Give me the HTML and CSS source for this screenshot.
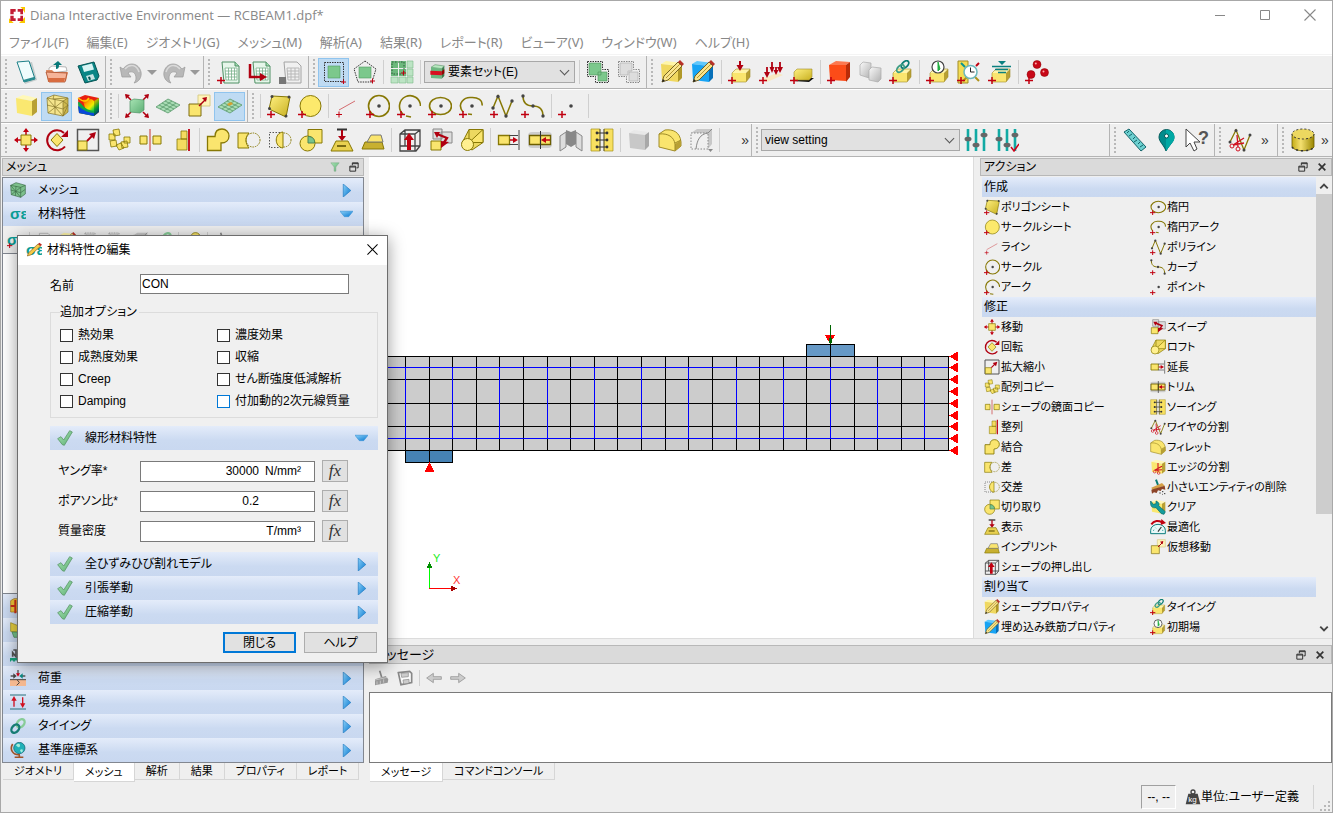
FILE: index.html
```html
<!DOCTYPE html>
<html lang="ja">
<head>
    <meta charset="UTF-8">
    <meta name="viewport" content="width=device-width, initial-scale=1.0">
    <title>Diana Interactive Environment — RCBEAM1.dpf*</title>
    <link rel="stylesheet" href="styles.css">
</head>
<body>
    <!-- icon sprite -->
    <svg class="sprite" aria-hidden="true">
        <defs>
            <linearGradient id="gy" x1="0" y1="0" x2="1" y2="1"><stop offset="0" stop-color="#fff080"/><stop offset="1" stop-color="#c8b020"/></linearGradient>
            <linearGradient id="gg" x1="0" y1="0" x2="1" y2="1"><stop offset="0" stop-color="#a8e4b4"/><stop offset="1" stop-color="#5cae74"/></linearGradient>
            <linearGradient id="gr" x1="0" y1="0" x2="1" y2="1"><stop offset="0" stop-color="#fafafa"/><stop offset="1" stop-color="#b0b0b0"/></linearGradient>
            <linearGradient id="gb" x1="0" y1="0" x2="1" y2="1"><stop offset="0" stop-color="#8ad0f8"/><stop offset="1" stop-color="#0878d0"/></linearGradient>
            <linearGradient id="rainbow" x1="0" y1="0" x2="1" y2="1"><stop offset="0" stop-color="#e00"/><stop offset=".3" stop-color="#fa0"/><stop offset=".5" stop-color="#ee0"/><stop offset=".7" stop-color="#0c4"/><stop offset="1" stop-color="#00c"/></linearGradient>
            <linearGradient id="cyl" x1="0" y1="0" x2="1" y2="0"><stop offset="0" stop-color="#c4ac18"/><stop offset=".4" stop-color="#f4e070"/><stop offset="1" stop-color="#9a8600"/></linearGradient>
            <path id="plus" d="M0 20.500h8M4 17v7" stroke="#c00010" stroke-width="1.500" fill="none"/>
            <g id="pencil"><path d="M2 22l2-6L18 2l4 4L8 20z" fill="#f8e48c" stroke="#66541a" stroke-width=".9"/><path d="M6 18L20 4" stroke="#b89830"/><path d="M2 22l1-3 2 2z" fill="#222"/><path d="M18 2l2-2 4 4-2 2z" fill="#b83028"/></g>
            <g id="block"><path d="M4 13l4-4h14l-4 4z" fill="#fff4a8"/><path d="M4 13h14v9H4z" fill="#fae56e"/><path d="M18 13l4-4v8l-4 5z" fill="#b8a032"/><path d="M4 13l4-4h14v8l-4 5H4z" fill="none" stroke="#a08c28" stroke-width=".6"/></g>
            <g id="sheet"><path d="M5 2h13l4 4v17H7z" fill="#e6f6ea" stroke="#4e9064"/><path d="M18 2v4h4" fill="#a4dcb2" stroke="#4e9064"/><path d="M8 8h12v12H9zM8 11h12M8.500 14H20M8.500 17H20M11.500 8v12M14.500 8v12M17.500 8v12" fill="#fff" stroke="#78b08a" stroke-width=".8"/></g>
        </defs>
        <symbol id="logo" viewBox="0 0 24 24"><path d="M17 0h7v7zM0 24v-7l7 7zM15 24l9-9v9zM18 0l6 0v9z" fill="#fbc800"/><path d="M2 3h8v4H7v4H2zM13 3h8v8h-4V7h-4zM2 13h5v4h3v4H2zM21 13v8h-8v-4h4v-4z" fill="#c41c34"/></symbol>
        <symbol id="new" viewBox="0 0 24 24"><path d="M5 3l13-1 5 18-12 4z" fill="#98a8a8" opacity=".5"/><path d="M3 2l12-1 6 18-11 3z" fill="#eefcfc" stroke="#1c8088"/><path d="M10 22l-1-2 11-3 1 2z" fill="#2a8c90"/></symbol>
        <symbol id="open" viewBox="0 0 24 24"><path d="M4 8l3-2 14 1 1 4-18 2z" fill="#fff" stroke="#999" stroke-width=".7"/><path d="M1 10h6l2 2h14l-2 9-18 1z" fill="#e08a60"/><path d="M1 12l21 1-2 9H4z" fill="#f6b498" stroke="#a84c2a" stroke-width=".8"/><path d="M3 18h17l-1 4H4z" fill="#d86c40"/><path d="M11 9V5h-3l5-4 4 4h-3c0 3-1 4-3 4z" fill="#087878"/></symbol>
        <symbol id="save" viewBox="0 0 24 24"><path d="M2 6l16-4 5 14-2 4-12 3z" fill="#0a8686" stroke="#045454"/><path d="M6 6l10-2.500 2 6-10 2.500z" fill="#d8f4f4"/><path d="M10 16l7-2 2 5-7 2z" fill="#c8e4e4"/><path d="M12 17l2-.5 1 3-2 .5z" fill="#045454"/></symbol>
        <symbol id="undo" viewBox="0 0 24 24"><path d="M1 7l2 10h9l-3-4c4-3 8 0 8 5 0 2-1 4-2 5 5-1 8-6 7-11C20 3 10 1 4 9z" fill="#b8b8b8" stroke="#9a9a9a" stroke-width=".7"/><path d="M6 9c5-6 12-4 14 3" stroke="#dadada" stroke-width="1.500" fill="none"/></symbol>
        <symbol id="redo" viewBox="0 0 24 24"><path d="M23 7l-2 10h-9l3-4c-4-3-8 0-8 5 0 2 1 4 2 5-5-1-8-6-7-11C4 3 14 1 20 9z" fill="#b8b8b8" stroke="#9a9a9a" stroke-width=".7"/><path d="M18 9C13 3 6 5 4 12" stroke="#dadada" stroke-width="1.500" fill="none"/></symbol>
        <symbol id="sheet-add" viewBox="0 0 24 24"><use href="#sheet"/><use href="#plus"/></symbol>
        <symbol id="sheet-go" viewBox="0 0 24 24"><use href="#sheet"/><path d="M2 4v13h13" fill="none" stroke="#b00010" stroke-width="2.500"/><path d="M12 13l7 4-7 4z" fill="#b00010"/></symbol>
        <symbol id="sheet-off" viewBox="0 0 24 24"><path d="M5 2h13l4 4v17H7z" fill="#f0f0f0" stroke="#a4a4a4"/><path d="M8 8h12v12H9zM8 11h12M8 14h12M8 17h12M12 8v12M16 8v12" fill="none" stroke="#b8b8b8"/><path d="M0 17h7v7H0z" fill="#777"/></symbol>
        <symbol id="sel-box" viewBox="0 0 24 24"><path d="M2.500 2.500h19v19h-19z" fill="none" stroke="#333" stroke-dasharray="1.500 1"/><path d="M6 6h12v12H6z" fill="#7cc88c" stroke="#4f9c60" stroke-width=".6"/><path d="M19 22h5M21.500 19.500v5" stroke="#c00010"/></symbol>
        <symbol id="sel-poly" viewBox="0 0 24 24"><path d="M12 1l11 8-4 13H5L1 9z" fill="none" stroke="#333" stroke-dasharray="1.500 1"/><path d="M6 7h12v11H6z" fill="#7cc88c" stroke="#4f9c60" stroke-width=".6"/><path d="M17 21h5M19.500 18.500v5" stroke="#c00010"/></symbol>
        <symbol id="grid" viewBox="0 0 24 24"><path d="M1 1h7v7H1zM9 1h7v7H9zM1 9h7v7H1zM9 9h7v7H9z" fill="#6cb87c"/><path d="M17 1h6v7h-6zM17 9h6v7h-6zM1 17h7v6H1zM9 17h7v6H9zM17 17h6v6h-6z" fill="#bce4c4" stroke="#78b888" stroke-width=".6"/><path d="M2 2h12v12H2z" fill="none" stroke="#2c5c38" stroke-dasharray="1.500 1.500"/><path d="M11 13h5M13.500 10.500v5" stroke="#c00010"/></symbol>
        <symbol id="set" viewBox="0 0 24 24"><path d="M3 5l6-4 14 2-4 4z" fill="#b8e8c0" stroke="#387848" stroke-width=".7"/><path d="M3 5l16 2v15L3 21z" fill="#6cb880"/><path d="M19 7l4-4v15l-4 4z" fill="#3c7c4c"/><path d="M2 10l17 1v6L2 16z" fill="#d81020"/><path d="M19 11l4-3v6l-4 3z" fill="#900"/></symbol>
        <symbol id="union-on" viewBox="0 0 24 24"><path d="M1.500 1.500h15v8h6v13h-13v-6h-8z" fill="none" stroke="#333" stroke-dasharray="1.500 1"/><path d="M3 3h12v12H3zM12 12h9v9h-9z" fill="#7cc88c" stroke="#4a9058" stroke-width=".6"/></symbol>
        <symbol id="union-off" viewBox="0 0 24 24"><path d="M1.500 1.500h15v8h6v13h-13v-6h-8z" fill="none" stroke="#888" stroke-dasharray="1.500 1"/><path d="M3 3h12v8h-4v4H3zM12 12h9v9h-9z" fill="#ddd" stroke="#aaa" stroke-width=".6"/></symbol>
        <symbol id="prop" viewBox="0 0 24 24"><path d="M1 4l5-3 16 2-4 3z" fill="#fff6a8"/><path d="M1 4l17 2v16L2 20z" fill="#f0d860"/><path d="M18 6l4-3v15l-4 4z" fill="#b09828"/><use href="#pencil"/></symbol>
        <symbol id="rebar" viewBox="0 0 24 24"><path d="M1 4l5-3 16 2-4 3z" fill="#60c8fc"/><path d="M1 4l17 2v16L2 20z" fill="#18a4f4"/><path d="M18 6l4-3v15l-4 4z" fill="#0870b8"/><use href="#pencil"/></symbol>
        <symbol id="load" viewBox="0 0 24 24"><use href="#block"/><path d="M12 1v6" stroke="#b00010" stroke-width="2"/><path d="M8.500 5h7L12 11z" fill="#b00010"/><use href="#plus"/></symbol>
        <symbol id="loads" viewBox="0 0 24 24"><path d="M2 19l16-6 6 2-16 7z" fill="#f8e8c0"/><path d="M8 7v8M13 2v8M17 7v6M21 2v8" stroke="#b00010" stroke-width="1.800"/><path d="M5 12h6l-3 6zM10.500 7h5L13 13zM18 7h6l-3 6zM14.500 10h5L17 15z" fill="#b00010"/><use href="#plus"/></symbol>
        <symbol id="support" viewBox="0 0 24 24"><path d="M3 21l6-3h15l-5 4z" fill="#111"/><path d="M4 12l3-3h15v8l-3 3H4z" fill="url(#gy)" stroke="#a08c28" stroke-width=".6"/><use href="#plus"/></symbol>
        <symbol id="red-cube" viewBox="0 0 24 24"><path d="M2 5l17-1v17L3 20z" fill="#fc4c18"/><path d="M2 5l7-4 14 1-4 3z" fill="#fc7850"/><path d="M19 5l4-3v15l-4 5z" fill="#b82c08"/><use href="#plus"/></symbol>
        <symbol id="cubes-off" viewBox="0 0 24 24"><path d="M2 5l3-3 8 1v13l-2 2-9-3z" fill="url(#gr)" stroke="#aaa" stroke-width=".7"/><path d="M11 10l3-3 9 1v11l-3 3-9-2z" fill="url(#gr)" stroke="#aaa" stroke-width=".7"/></symbol>
        <symbol id="tying" viewBox="0 0 24 24"><use href="#block"/><ellipse cx="16" cy="4.500" rx="4.500" ry="2.800" transform="rotate(-45 16 4.500)" fill="none" stroke="#0a7c74" stroke-width="1.800"/><ellipse cx="11.500" cy="8.500" rx="4.500" ry="2.800" transform="rotate(-45 11.500 8.500)" fill="none" stroke="#3c9c84" stroke-width="1.800"/><use href="#plus"/></symbol>
        <symbol id="initial" viewBox="0 0 24 24"><use href="#block"/><circle cx="12" cy="7" r="6" fill="#fff" stroke="#444" stroke-width="1.200"/><path d="M12 2v9l2-2z" fill="#20b040" stroke="#20b040"/><use href="#plus"/></symbol>
        <symbol id="time" viewBox="0 0 24 24"><path d="M1 1h10v22H1z" fill="#f4dc54" stroke="#a08c28"/><path d="M4 3l4 4" stroke="#0a9490" stroke-width="2"/><path d="M22 3l-3 3" stroke="#c00010" stroke-width="2"/><path d="M22 21l-4-4M6 21l4-4" stroke="#b0941c" stroke-width="2"/><circle cx="13.500" cy="12" r="6.500" fill="#fff" stroke="#6cb8bc" stroke-width="1.500"/><path d="M13.500 7.500V12h4" fill="none" stroke="#222"/><use href="#plus"/></symbol>
        <symbol id="water" viewBox="0 0 24 24"><use href="#block"/><path d="M10 1h8l-4 4z" fill="#0a8080"/><path d="M4 6.500h19M7 9.500h13M10 12.500h8" stroke="#0a8080" stroke-width="1.300"/><use href="#plus"/></symbol>
        <symbol id="nodes" viewBox="0 0 24 24"><g fill="#c80818" stroke="#800" stroke-width=".5"><circle cx="12" cy="4.500" r="4"/><circle cx="6" cy="14.500" r="4"/><circle cx="19.500" cy="12.500" r="4"/></g><circle cx="10.800" cy="3.500" r="1" fill="#faa"/><circle cx="18.500" cy="11.500" r="1" fill="#faa"/><use href="#plus"/></symbol>

        <symbol id="cube" viewBox="0 0 24 24"><path d="M2 4l7-3 14 3-3 3z" fill="#fff8b8"/><path d="M2 4l16 3v15L3 19z" fill="#fae870"/><path d="M18 7l5-3v14l-5 4z" fill="#b8a034"/></symbol>
        <symbol id="cube-mesh" viewBox="0 0 24 24"><path d="M2 4l7-3 14 3v14l-5 4L3 19z" fill="#f4e48c"/><path d="M18 7l5-3v14l-5 4z" fill="#cdb850"/><path d="M2 4l7-3 14 3v14l-5 4L3 19zM2 4l16 3v15M18 7l5-3M2 4l16 18M3 19L18 7M2 11l16 4M10 5v15M18 15l5-4M18 22l5-11-5-4M9 1l-1 4 14-1" fill="none" stroke="#84742a" stroke-width=".7"/></symbol>
        <symbol id="contour" viewBox="0 0 24 24"><path d="M2 4l7-3 14 3v14l-5 4L3 19z" fill="#e82010"/><path d="M6 4c5 4 8-1 12 3l5-3v14l-5 4-7-2z" fill="url(#rainbow)"/><path d="M2 8c4 0 5 8 16 9v5L3 19z" fill="#10a848"/><path d="M2 12c3 1 5 6 16 7v3L3 19z" fill="#0848d8"/><path d="M2 4c4 3 8 5 11 0" stroke="#fc0" stroke-width="1.500" fill="none"/><path d="M18 7l5-3v14l-5 4z" fill="#000" opacity=".25"/></symbol>
        <symbol id="fit" viewBox="0 0 24 24"><path d="M1 1l5 5M23 1l-5 5M1 23l5-5M23 23l-5-5" stroke="#b00010" stroke-width="1.500"/><path d="M0 0l5 1-4 4zM24 0l-5 1 4 4zM0 24l5-1-4-4zM24 24l-5-1 4-4z" fill="#b00010"/><path d="M5 7l4-2 10 1v10l-4 3-10-1z" fill="url(#gg)" stroke="#4e9464" stroke-width=".7"/></symbol>
        <symbol id="plane" viewBox="0 0 24 24"><path d="M0 13l12-8 12 6-12 8z" fill="#a8dcb4" stroke="#58986a" stroke-width=".8"/><path d="M3 11l12 6M6 9l12 6M9 7l12 6M4 15l12-8M8 17l12-8" stroke="#58986a" stroke-width=".8"/></symbol>
        <symbol id="plane-on" viewBox="0 0 24 24"><use href="#plane"/><path d="M9 10l4-2 2 2-4 2z" fill="#d8a030"/></symbol>
        <symbol id="vmove" viewBox="0 0 24 24"><path d="M11 1h12v11H11z" fill="#fff4b8" stroke="#d8cc88"/><path d="M2 10h12v12H2z" fill="#fae56e" stroke="#7c6c10"/><path d="M12 12l7-7" stroke="#b00010" stroke-width="1.500"/><path d="M20 3l-1 5-4-4z" fill="#b00010"/></symbol>
        <symbol id="poly" viewBox="0 0 24 24"><path d="M5 2l18 1-4 20L2 15z" fill="url(#gy)" stroke="#877805"/><g fill="#444"><circle cx="5" cy="2.500" r="1.500"/><circle cx="22" cy="3" r="1.500"/><circle cx="19" cy="22" r="1.500"/><circle cx="2.500" cy="14.500" r="1.500"/></g><use href="#plus"/></symbol>
        <symbol id="disc" viewBox="0 0 24 24"><circle cx="12.500" cy="12" r="10.500" fill="#fce96c" stroke="#877805"/><use href="#plus"/></symbol>
        <symbol id="line" viewBox="0 0 24 24"><path d="M4 16L20 7" stroke="#d46c70"/><path d="M1 20.500h6M4 17.500v6" stroke="#c00010"/></symbol>
        <symbol id="circle" viewBox="0 0 24 24"><circle cx="13" cy="12" r="10.500" fill="none" stroke="#877805" stroke-width="1.600"/><circle cx="13" cy="12" r="1.800" fill="#444"/><use href="#plus"/></symbol>
        <symbol id="arc" viewBox="0 0 24 24"><path d="M6 20A10.500 10.500 0 1 1 23.500 12M9 22l5 1" fill="none" stroke="#877805" stroke-width="1.600"/><circle cx="13" cy="12" r="1.800" fill="#444"/><use href="#plus"/></symbol>
        <symbol id="ellipse" viewBox="0 0 24 24"><ellipse cx="12.500" cy="12" rx="11" ry="8.500" fill="none" stroke="#877805" stroke-width="1.600"/><circle cx="13" cy="12" r="1.800" fill="#444"/><use href="#plus"/></symbol>
        <symbol id="earc" viewBox="0 0 24 24"><path d="M4 18C-3 9 6 3 12 3.500c7-.5 12 3 11 8M9 20l4 .5" fill="none" stroke="#877805" stroke-width="1.600"/><circle cx="13" cy="12" r="1.800" fill="#444"/><use href="#plus"/></symbol>
        <symbol id="polyline" viewBox="0 0 24 24"><path d="M3 14L8 2l8 20 6-15" fill="none" stroke="#877805" stroke-width="1.500"/><g fill="#444"><circle cx="3" cy="14" r="1.700"/><circle cx="8" cy="2.500" r="1.700"/><circle cx="16" cy="22" r="1.700"/><circle cx="22" cy="7" r="1.700"/></g><use href="#plus"/></symbol>
        <symbol id="curve" viewBox="0 0 24 24"><path d="M2 2c0 7 3 10 10 10s10 3 10 10" fill="none" stroke="#877805" stroke-width="1.500"/><g fill="#444"><circle cx="2" cy="2" r="1.700"/><circle cx="12" cy="12" r="1.700"/><circle cx="22" cy="22" r="1.700"/></g><use href="#plus"/></symbol>
        <symbol id="point" viewBox="0 0 24 24"><circle cx="13" cy="12" r="1.800" fill="#444"/><use href="#plus"/></symbol>

        <symbol id="move" viewBox="0 0 24 24"><path d="M12 1v22M1 12h22" stroke="#c00010" stroke-width="1.500"/><path d="M12 0l3 4H9zM12 24l3-4H9zM0 12l4-3v6zM24 12l-4-3v6z" fill="#c00010"/><path d="M7 7h10v10H7z" fill="#fae56e" stroke="#877805"/></symbol>
        <symbol id="rotate" viewBox="0 0 24 24"><path d="M20 18.500A10 10 0 1 1 19 5" fill="none" stroke="#b00010" stroke-width="2"/><path d="M23 2v7h-7z" fill="#b00010"/><path d="M12 5.500l6 6.500-6 6.500L6 12z" fill="#fae56e" stroke="#877805"/></symbol>
        <symbol id="scale" viewBox="0 0 24 24"><path d="M1.500 1.500h21v21h-21z" fill="none" stroke="#555" stroke-width="1.500"/><path d="M2 13h9v9H2z" fill="#fae56e" stroke="#877805"/><path d="M11 13l6-6" stroke="#b00010" stroke-width="1.800"/><path d="M20 4l-2 7-5-5z" fill="#b00010"/></symbol>
        <symbol id="array" viewBox="0 0 24 24"><g fill="#fae56e" stroke="#877805" stroke-width=".8"><path d="M6 2l6-1 1 6-6 1zM2 6l6 0 0 6-6 0zM3 13l6-1 1 6-6 1zM9 17l5-2 3 5-5 2zM17 9h6v6h-6zM14 14l6-1 1 6-6 1z"/></g></symbol>
        <symbol id="mirror" viewBox="0 0 24 24"><path d="M2 8h7v8H2zM15 8h8v8h-8z" fill="#fae56e" stroke="#877805"/><path d="M12 1v22" stroke="#d47070" stroke-width="1.500"/></symbol>
        <symbol id="align" viewBox="0 0 24 24"><path d="M8 11h10v11H8zM12 3h6v8h-6z" fill="#f4dc60" stroke="#877805" stroke-width=".8"/><path d="M20 1v22" stroke="#c00010" stroke-width="1.800"/></symbol>
        <symbol id="unite" viewBox="0 0 24 24"><path d="M1.500 8.500H9C9 3 12 1 16 1a7 7 0 0 1 7 7c0 4-3 7-8 7v7.500H1.500z" fill="#fae56e" stroke="#877805" stroke-width="1.300"/></symbol>
        <symbol id="diff" viewBox="0 0 24 24"><path d="M1 5h11c-4 4-4 10 0 15H1z" fill="#fae56e" stroke="#877805"/><circle cx="16" cy="12" r="7" fill="none" stroke="#877805" stroke-dasharray="1.500 1"/></symbol>
        <symbol id="intersect" viewBox="0 0 24 24"><path d="M15 4.500H1.500v15H15" fill="none" stroke="#555" stroke-dasharray="1.500 1.500"/><circle cx="16" cy="12" r="7" fill="none" stroke="#877805" stroke-dasharray="1.500 1"/><path d="M15 4v16c-9-1-9-15 0-16z" fill="#fae56e" stroke="#877805"/></symbol>
        <symbol id="cut" viewBox="0 0 24 24"><path d="M9 1.500h14V15H9z" fill="#fae56e" stroke="#877805"/><circle cx="8.500" cy="15.500" r="7.500" fill="#fae56e" stroke="#877805"/><path d="M9 8.500c5 0 7 3 6.500 6.500H9z" fill="#78c48c" stroke="#4c8454"/></symbol>
        <symbol id="project" viewBox="0 0 24 24"><path d="M7 1.500h10" stroke="#333" stroke-width="2"/><path d="M12 2v8" stroke="#b00010" stroke-width="2"/><path d="M8 8h8l-4 5z" fill="#b00010"/><path d="M6 13h12l5 10H1z" fill="#e8d050" stroke="#877805"/><path d="M7 18h9" stroke="#554a00" stroke-width="1.500"/></symbol>
        <symbol id="imprint" viewBox="0 0 24 24"><path d="M4 14h17l2 7H1z" fill="#c8b030" stroke="#877805"/><path d="M10 7h10l2 7H6z" fill="#fae56e" stroke="#777"/></symbol>
        <symbol id="extrude" viewBox="0 0 24 24"><path d="M2 6l5-4h15v16l-4 5H2zM2 6h15v17M17 6l5-4M7 2v16H2M7 18h15" fill="none" stroke="#444" stroke-width="1.300"/><path d="M9 22V12H6l5-7 5 7h-3v10z" fill="#c00010"/></symbol>
        <symbol id="sweep" viewBox="0 0 24 24"><path d="M4 1h9v10H4zM12 4h11v11H12z" fill="#ddd" stroke="#888"/><path d="M2 13h10v9H2z" fill="#fae56e" stroke="#877805"/><path d="M8 6l10 4-4 6" fill="none" stroke="#b00010" stroke-width="2.300"/><path d="M5 4h6l-3 6zM20 14l-8 6v-7z" fill="#b00010"/></symbol>
        <symbol id="loft" viewBox="0 0 24 24"><path d="M9 1.500h14v13L12 22 2 15z" fill="#ecd860" stroke="#877805"/><path d="M9 14.500h14V1.500z" fill="#fae56e" stroke="#877805"/><path d="M9 1.500v13" stroke="#877805"/><circle cx="7.500" cy="16.500" r="6" fill="#fff090" stroke="#877805"/></symbol>
        <symbol id="extend" viewBox="0 0 24 24"><path d="M1.500 7.500h11v9h-11z" fill="#fae56e" stroke="#877805" stroke-width="1.300"/><path d="M12 7.500h9M12 16.500h9M22 2v20" fill="none" stroke="#444"/><path d="M13 12h4" stroke="#c00010" stroke-width="1.500"/><path d="M16 9l5 3-5 3z" fill="#c00010"/></symbol>
        <symbol id="trim" viewBox="0 0 24 24"><rect x="0" y="4" width="24" height="16" rx="4" fill="#999" opacity=".4"/><path d="M1.500 7.500h11v9h-11zM12.500 7.500h10v9h-10z" fill="#fae56e" stroke="#6c5e00" stroke-width="1.300"/><path d="M12.500 3v18" stroke="#333"/><path d="M18 12h4" stroke="#c00010" stroke-width="1.500"/><path d="M18 9l-5 3 5 3z" fill="#c00010"/></symbol>
        <symbol id="fold" viewBox="0 0 24 24"><path d="M7 2l5 2 5-2v14l-5 3-5-3z" fill="#888"/><path d="M1 8l6-4v15l-6 4zM23 8l-6-4v15l6 4z" fill="#ddd" stroke="#888"/></symbol>
        <symbol id="sew" viewBox="0 0 24 24"><path d="M1 1h9v22H1zM14 1h9v22h-9z" fill="#f8e060" stroke="#a89418" stroke-width=".7"/><path d="M10 1v22M14 1v22" stroke="#444" stroke-width=".8"/><path d="M7 5h10M7 12h10M7 19h10" stroke="#333"/><g fill="#333"><circle cx="7" cy="5" r="1.400"/><circle cx="17" cy="5" r="1.400"/><circle cx="7" cy="12" r="1.400"/><circle cx="17" cy="12" r="1.400"/><circle cx="7" cy="19" r="1.400"/><circle cx="17" cy="19" r="1.400"/></g></symbol>
        <symbol id="cube-off" viewBox="0 0 24 24"><path d="M2 5l5-3 14 2-3 3z" fill="#e8e8e8"/><path d="M2 5l16 2v15L3 20z" fill="#c8c8c8"/><path d="M18 7l4-3v14l-4 4z" fill="#a8a8a8"/></symbol>
        <symbol id="fillet" viewBox="0 0 24 24"><path d="M1 6l6-4c8-1 15 2 16 12v4l-6 5-16-4z" fill="#fae56e" stroke="#a08c28"/><path d="M17 16l6-4v6l-6 5z" fill="#b8a034"/><path d="M1 6c9-1 15 3 16 10v7M17 15l6-3" fill="none" stroke="#a08c28"/></symbol>
        <symbol id="unfillet" viewBox="0 0 24 24"><path d="M2 5l6-4h15v15l-4 5V5z" fill="#c8c8c8"/><path d="M2 5h17v8L9 14c-1 3-1 5-2 8H2z" fill="#f0f0f0"/><path d="M2 5h17v16H2z" fill="none" stroke="#888" stroke-dasharray="1.500 1.500"/><path d="M19 5c-8 1-11 7-12 16M19 5l4-4" fill="none" stroke="#888"/><path d="M19 21h5l-2.500 3z" fill="#888"/></symbol>
        <symbol id="sliders" viewBox="0 0 24 24"><path d="M4 1v22M12 1v22M20 1v22" stroke="#12aaa4" stroke-width="2.600"/><g fill="#666"><ellipse cx="4" cy="11" rx="3.500" ry="2.300"/><ellipse cx="12" cy="17" rx="3.500" ry="2.300"/><ellipse cx="20" cy="7" rx="3.500" ry="2.300"/></g></symbol>
        <symbol id="sliders-ok" viewBox="0 0 24 24"><use href="#sliders"/><path d="M16 19l3 4 5-7" fill="none" stroke="#d00018" stroke-width="1.500"/></symbol>
        <symbol id="ruler" viewBox="0 0 24 24"><path d="M1 4l5-3 17 18-5 4z" fill="#6cd0d0" stroke="#14646a"/><path d="M6 3l-2 2M9 6l-3 2M12 9l-2 2M14 12l-3 2M17 14l-2 2M20 17l-3 2" stroke="#14646a"/></symbol>
        <symbol id="pin" viewBox="0 0 24 24"><path d="M12 23C10 17 5 14 5 9a7.500 7.500 0 0 1 15 0c0 5-5 8-8 14z" fill="#008c8c" stroke="#055c5c"/><path d="M12 23V2c10 0 10 10 6 13z" fill="#00a8a4"/><circle cx="12.500" cy="8" r="2" fill="#fff" stroke="#055"/></symbol>
        <symbol id="whats" viewBox="0 0 24 24"><path d="M1 1v18l4-4 4 8 3-2-3-7h6z" fill="#fff" stroke="#444"/><text class="qmark" x="13" y="16">?</text></symbol>
        <symbol id="wirecut" viewBox="0 0 24 24"><path d="M2 14L8 2l8 20 6-15" fill="none" stroke="#877805" stroke-width="1.300"/><g fill="#444"><circle cx="2" cy="14" r="1.500"/><circle cx="8" cy="2.500" r="1.500"/><circle cx="16" cy="22" r="1.500"/><circle cx="22" cy="7" r="1.500"/></g><path d="M9 7l1 12M16 10L5 17M16 15l-11 2" stroke="#d01020" stroke-width="1.300"/><circle cx="4" cy="18" r="2" fill="none" stroke="#d01020"/><circle cx="10" cy="21" r="2" fill="none" stroke="#d01020"/></symbol>
        <symbol id="cylinder" viewBox="0 0 24 24"><path d="M1 6v13c3 5 19 5 22 0V6z" fill="url(#cyl)" stroke="#6c5e00" stroke-width=".8"/><ellipse cx="12" cy="6" rx="11" ry="5" fill="#ecd860" stroke="#333" stroke-dasharray="2 2"/><path d="M1 19c3 5 19 5 22 0" fill="none" stroke="#333" stroke-width="1.500" stroke-dasharray="2 3"/></symbol>
        <symbol id="edgecut" viewBox="0 0 24 24"><use href="#cube"/><path d="M12 6l0 13M18 11L7 17M18 16l-11 1" stroke="#d01020" stroke-width="1.600"/><circle cx="7" cy="19" r="2" fill="none" stroke="#d01020"/><circle cx="13" cy="21" r="2" fill="none" stroke="#d01020"/></symbol>
        <symbol id="sweepout" viewBox="0 0 24 24"><path d="M9 1l3 8" stroke="#087c74" stroke-width="3"/><path d="M2 13l16-7 4 4L4 17z" fill="#d4a048"/><path d="M2 16l20-6 1 6-5-1-2 3-4-1-2 4-4-1-3 2z" fill="#8c4428"/><path d="M14 21h2M18 19h2M21 22h2M18 23h1" stroke="#333" stroke-width="1.500"/></symbol>
        <symbol id="clear" viewBox="0 0 24 24"><use href="#cube"/><path d="M1 3l4 5 4-1V3c5 2 5 5 4 7l10 9-2 4-4-1-8-9c-6 1-9-2-8-10z" fill="#159c9c" stroke="#066"/></symbol>
        <symbol id="optimize" viewBox="0 0 24 24"><path d="M1 22V17a11 9 0 0 1 22 0v5z" fill="#e8f8f8" stroke="#0a7c7c" stroke-width="1.500"/><path d="M12 19l5-7" stroke="#333" stroke-width="1.800"/><path d="M5 18l1-2M8 13l1 1M18 17h2" stroke="#088"/><path d="M2 8c4-6 11-6 16-3" fill="none" stroke="#c00010" stroke-width="3"/><path d="M17 0l7 6-8 3z" fill="#c00010"/></symbol>
        <symbol id="mesh" viewBox="0 0 24 24"><path d="M1 5l8-4 14 4v13l-7 5-14-4z" fill="#7cc08c"/><path d="M1 5l8-4 14 4v13l-7 5-14-4zM1 5l15 3v15M16 8l7-3M1 5l15 18M2 19L16 8M9 6l-1 15M1 12l15 4 7-5" fill="none" stroke="#3c6c48"/></symbol>
        <symbol id="mat" viewBox="0 0 24 24"><text class="mat-text" x="0" y="20">σε</text></symbol>
        <symbol id="mat-edit" viewBox="0 0 24 24"><text class="mat-text" x="0" y="20">σε</text><path d="M2 21l2-5L18 3l4 3L8 19z" fill="#f5c848" stroke="#86641c"/><path d="M18 3l2-2 4 3-2 2z" fill="#c02820"/></symbol>
        <symbol id="loadcase" viewBox="0 0 24 24"><path d="M0 14h24v10H0z" fill="#f4b890"/><path d="M0 14.500h24M11 15l3 4-4 4" fill="none" stroke="#333" stroke-width="1.300"/><path d="M12 0v7M1 9h6M23 9h-6" stroke="#555" stroke-width="2"/><path d="M9 5h6l-3 5z" fill="#d00018"/><path d="M5 5l5 4-5 4z" fill="#444"/><path d="M19 5l-5 4 5 4z" fill="#0a8c84"/></symbol>
        <symbol id="bc" viewBox="0 0 24 24"><path d="M0 1.500h24M0 22.500h24" stroke="#28707c" stroke-width="1.800"/><path d="M6 19V8M19 5v11" stroke="#d01020" stroke-width="2"/><path d="M2 10l4-7 4 7zM15 14l4 7 4-7z" fill="#d01020"/></symbol>
        <symbol id="chain" viewBox="0 0 24 24"><ellipse cx="16" cy="8" rx="7" ry="5" transform="rotate(-50 16 8)" fill="none" stroke="#88cc98" stroke-width="3.500"/><ellipse cx="8" cy="16" rx="7" ry="5" transform="rotate(-50 8 16)" fill="none" stroke="#167c74" stroke-width="3.500"/></symbol>
        <symbol id="globe" viewBox="0 0 24 24"><path d="M4 3c-5 8 0 17 11 16M14 20v3M7 23h13" fill="none" stroke="#a05428" stroke-width="2.500"/><circle cx="14" cy="9" r="8.500" fill="#20b0b8" stroke="#0c5c68"/><path d="M9 5c3-4 7-2 6 1s-4 2-6-1zM15 12c3-2 5-1 4 2s-3 2-4-2z" fill="#a4ecdc"/></symbol>
        <symbol id="gift" viewBox="0 0 24 24"><path d="M1 4l5-3h16v20H1z" fill="#f4c838" stroke="#a06c10"/><path d="M8 3v20M1 12h6M14 6v12" stroke="#d03018" stroke-width="3"/></symbol>
        <symbol id="section-geo" viewBox="0 0 24 24"><path d="M1 1l22 9-10 6-12-2z" fill="#e8d040" stroke="#98860c"/><path d="M3 15h20v8H6z" fill="#78c48c" stroke="#3c8450"/></symbol>
        <symbol id="ground" viewBox="0 0 24 24"><path d="M4 16V10l5 6V6H5" fill="none" stroke="#555" stroke-width="2.500"/><path d="M0 18h24v6l-3-3-3 3-3-3-3 3-3-3-3 3-3-3-3 3z" fill="#18a07c"/></symbol>
        <symbol id="broom" viewBox="0 0 24 24"><path d="M10 1l3 10" stroke="#888" stroke-width="2.500"/><path d="M3 14l16-5 4 5-1 5-19 4z" fill="#999"/><path d="M3 15l19-4M6 17v5M11 16v5M16 14v5" stroke="#ddd"/></symbol>
        <symbol id="save-off" viewBox="0 0 24 24"><path d="M2 4l17-2 3 3v14L6 22z" fill="#fafafa" stroke="#888" stroke-width="2.500"/><path d="M6 5l11-1v6L7 11zM9 15l9-1v6l-8 1z" fill="#ccc" stroke="#888"/></symbol>
        <symbol id="left" viewBox="0 0 24 24"><path d="M1 12l10-7v5h12v4H11v5z" fill="#ccc" stroke="#888"/></symbol>
        <symbol id="right" viewBox="0 0 24 24"><path d="M23 12l-10-7v5H1v4h12v5z" fill="#ccc" stroke="#888"/></symbol>
        <symbol id="check" viewBox="0 0 24 24"><path d="M1 13l5-3 4 5L19 1l4 2-12 20-3-1z" fill="url(#gg)" stroke="#4c8c58"/></symbol>
        <symbol id="tri-right" viewBox="0 0 12 12"><path d="M3 0l7 6-7 6z" fill="url(#gb)" stroke="#1e78c0" stroke-width=".6"/></symbol>
        <symbol id="tri-down" viewBox="0 0 12 12"><path d="M0 3h12L8 8H4z" fill="url(#gb)" stroke="#3c94d8" stroke-width=".6"/></symbol>
        <symbol id="restore" viewBox="0 0 12 12"><path d="M4 1h7v6H9M4 1v3M4 2h7M1 5h7v6H1zM1 6h7" fill="none" stroke="#333" stroke-width="1.200"/></symbol>
        <symbol id="x" viewBox="0 0 12 12"><path d="M2 2l8 8M10 2l-8 8" stroke="#333" stroke-width="2"/></symbol>
        <symbol id="x-thin" viewBox="0 0 12 12"><path d="M.5 .5l11 11M11.500 .5l-11 11" stroke="currentColor" stroke-width="1.100"/></symbol>
        <symbol id="filter" viewBox="0 0 12 12"><path d="M1 1h10L7 6v5H5V6z" fill="url(#gg)" stroke="#78a884" stroke-width=".6"/></symbol>
        <symbol id="kg" viewBox="0 0 24 24"><circle cx="12" cy="4.500" r="3" fill="none" stroke="#444" stroke-width="2"/><path d="M5 7h14l4 16H1z" fill="#444"/><text x="5" y="20" font-size="12" fill="#fff">kg</text></symbol>
    </svg>

    <div class="titlebar">
        <svg class="ico16"><use href="#logo"/></svg>
        <span class="caption">Diana Interactive Environment — RCBEAM1.dpf*</span>
        <div class="winbtns">
            <button aria-label="最小化"><svg viewBox="0 0 12 12"><path d="M1 6.500h10" stroke="currentColor"/></svg></button>
            <button aria-label="最大化"><svg viewBox="0 0 12 12"><path d="M1.500 1.500h9v9h-9z" fill="none" stroke="currentColor"/></svg></button>
            <button aria-label="ウィンドウを閉じる"><svg><use href="#x-thin"/></svg></button>
        </div>
    </div>
    <nav class="menubar">
        <a href="#">ファイル(F)</a><a href="#">編集(E)</a><a href="#">ジオメトリ(G)</a><a href="#">メッシュ(M)</a><a href="#">解析(A)</a><a href="#">結果(R)</a><a href="#">レポート(R)</a><a href="#">ビューア(V)</a><a href="#">ウィンドウ(W)</a><a href="#">ヘルプ(H)</a>
    </nav>

    <div class="toolrow">
        <div class="toolbar">
            <button class="tool" aria-label="新規"><svg><use href="#new"/></svg></button>
            <button class="tool" aria-label="開く"><svg><use href="#open"/></svg></button>
            <button class="tool" aria-label="保存"><svg><use href="#save"/></svg></button>
        </div>
        <div class="toolbar">
            <button class="tool" aria-label="元に戻す"><svg><use href="#undo"/></svg></button>
            <button class="drop" aria-label="元に戻す履歴"></button>
            <button class="tool" aria-label="やり直し"><svg><use href="#redo"/></svg></button>
            <button class="drop" aria-label="やり直し履歴"></button>
        </div>
        <div class="toolbar">
            <button class="tool" aria-label="表を追加"><svg><use href="#sheet-add"/></svg></button>
            <button class="tool" aria-label="表へ移動"><svg><use href="#sheet-go"/></svg></button>
            <button class="tool" aria-label="表を停止"><svg><use href="#sheet-off"/></svg></button>
        </div>
        <div class="toolbar">
            <button class="tool on" aria-label="矩形選択"><svg><use href="#sel-box"/></svg></button>
            <button class="tool" aria-label="多角形選択"><svg><use href="#sel-poly"/></svg></button>
            <i class="sep"></i>
            <button class="tool" aria-label="要素選択"><svg><use href="#grid"/></svg></button>
            <i class="sep"></i>
            <div class="combo set-combo">
                <svg class="ico16"><use href="#set"/></svg>
                <select aria-label="選択対象"><option>要素セット(E)</option></select>
            </div>
            <i class="sep"></i>
            <button class="tool" aria-label="選択に追加"><svg><use href="#union-on"/></svg></button>
            <button class="tool" aria-label="選択を解除"><svg><use href="#union-off"/></svg></button>
        </div>
        <div class="toolbar fill">
            <button class="tool" aria-label="シェーププロパティ"><svg><use href="#prop"/></svg></button>
            <button class="tool" aria-label="鉄筋プロパティ"><svg><use href="#rebar"/></svg></button>
            <i class="sep"></i>
            <button class="tool" aria-label="荷重"><svg><use href="#load"/></svg></button>
            <button class="tool" aria-label="分布荷重"><svg><use href="#loads"/></svg></button>
            <button class="tool" aria-label="支持"><svg><use href="#support"/></svg></button>
            <i class="sep"></i>
            <button class="tool" aria-label="接続"><svg><use href="#red-cube"/></svg></button>
            <button class="tool" aria-label="接触"><svg><use href="#cubes-off"/></svg></button>
            <button class="tool" aria-label="タイイング"><svg><use href="#tying"/></svg></button>
            <i class="sep"></i>
            <button class="tool" aria-label="初期場"><svg><use href="#initial"/></svg></button>
            <button class="tool" aria-label="時間"><svg><use href="#time"/></svg></button>
            <button class="tool" aria-label="水位"><svg><use href="#water"/></svg></button>
            <i class="sep"></i>
            <button class="tool" aria-label="節点"><svg><use href="#nodes"/></svg></button>
        </div>
    </div>

    <div class="toolrow">
        <div class="toolbar">
            <button class="tool" aria-label="シェーディング"><svg><use href="#cube"/></svg></button>
            <button class="tool on" aria-label="メッシュ表示"><svg><use href="#cube-mesh"/></svg></button>
            <button class="tool" aria-label="コンター"><svg><use href="#contour"/></svg></button>
        </div>
        <div class="toolbar">
            <i class="sep"></i>
            <button class="tool" aria-label="全体表示"><svg><use href="#fit"/></svg></button>
            <button class="tool" aria-label="作業平面"><svg><use href="#plane"/></svg></button>
            <button class="tool" aria-label="仮想移動"><svg><use href="#vmove"/></svg></button>
            <button class="tool on" aria-label="グリッドスナップ"><svg><use href="#plane-on"/></svg></button>
        </div>
        <div class="toolbar fill">
            <i class="sep"></i>
            <button class="tool" aria-label="ポリゴンシート"><svg><use href="#poly"/></svg></button>
            <button class="tool" aria-label="サークルシート"><svg><use href="#disc"/></svg></button>
            <i class="sep"></i>
            <button class="tool" aria-label="ライン"><svg><use href="#line"/></svg></button>
            <button class="tool" aria-label="サークル"><svg><use href="#circle"/></svg></button>
            <button class="tool" aria-label="アーク"><svg><use href="#arc"/></svg></button>
            <button class="tool" aria-label="楕円"><svg><use href="#ellipse"/></svg></button>
            <button class="tool" aria-label="楕円アーク"><svg><use href="#earc"/></svg></button>
            <button class="tool" aria-label="ポリライン"><svg><use href="#polyline"/></svg></button>
            <button class="tool" aria-label="カーブ"><svg><use href="#curve"/></svg></button>
            <i class="sep"></i>
            <button class="tool" aria-label="ポイント"><svg><use href="#point"/></svg></button>
            <i class="sep"></i>
        </div>
    </div>

    <div class="toolrow">
        <div class="toolbar">
            <button class="tool" aria-label="移動"><svg><use href="#move"/></svg></button>
            <button class="tool" aria-label="回転"><svg><use href="#rotate"/></svg></button>
            <button class="tool" aria-label="拡大縮小"><svg><use href="#scale"/></svg></button>
            <button class="tool" aria-label="配列コピー"><svg><use href="#array"/></svg></button>
            <button class="tool" aria-label="鏡面コピー"><svg><use href="#mirror"/></svg></button>
            <button class="tool" aria-label="整列"><svg><use href="#align"/></svg></button>
            <i class="sep"></i>
            <button class="tool" aria-label="結合"><svg><use href="#unite"/></svg></button>
            <button class="tool" aria-label="差"><svg><use href="#diff"/></svg></button>
            <button class="tool" aria-label="交差"><svg><use href="#intersect"/></svg></button>
            <button class="tool" aria-label="切り取り"><svg><use href="#cut"/></svg></button>
            <button class="tool" aria-label="投影"><svg><use href="#project"/></svg></button>
            <button class="tool" aria-label="インプリント"><svg><use href="#imprint"/></svg></button>
            <i class="sep"></i>
            <button class="tool" aria-label="押し出し"><svg><use href="#extrude"/></svg></button>
            <button class="tool" aria-label="スイープ"><svg><use href="#sweep"/></svg></button>
            <button class="tool" aria-label="ロフト"><svg><use href="#loft"/></svg></button>
            <i class="sep"></i>
            <button class="tool" aria-label="延長"><svg><use href="#extend"/></svg></button>
            <button class="tool" aria-label="トリム"><svg><use href="#trim"/></svg></button>
            <button class="tool" aria-label="展開"><svg><use href="#fold"/></svg></button>
            <button class="tool" aria-label="ソーイング"><svg><use href="#sew"/></svg></button>
            <i class="sep"></i>
            <button class="tool" aria-label="ソリッド"><svg><use href="#cube-off"/></svg></button>
            <button class="tool" aria-label="フィレット"><svg><use href="#fillet"/></svg></button>
            <button class="tool" aria-label="面取り"><svg><use href="#unfillet"/></svg></button>
            <i class="sep"></i>
            <button class="more wide">»</button>
        </div>
        <div class="toolbar fill">
            <div class="combo view-combo">
                <select aria-label="ビュー設定"><option>view setting</option></select>
            </div>
            <button class="tool" aria-label="ビュー設定の編集"><svg><use href="#sliders"/></svg></button>
            <button class="tool" aria-label="ビュー設定の適用"><svg><use href="#sliders-ok"/></svg></button>
        </div>
        <div class="toolbar">
            <button class="tool" aria-label="計測"><svg><use href="#ruler"/></svg></button>
            <button class="tool" aria-label="位置"><svg><use href="#pin"/></svg></button>
            <button class="tool" aria-label="ヒント"><svg><use href="#whats"/></svg></button>
        </div>
        <div class="toolbar">
            <button class="tool" aria-label="ワイヤの分割"><svg><use href="#wirecut"/></svg></button>
            <button class="more">»</button>
        </div>
        <div class="toolbar">
            <button class="tool" aria-label="円柱"><svg><use href="#cylinder"/></svg></button>
            <button class="more">»</button>
        </div>
    </div>

    <main class="workspace">
        <aside class="left">
            <div class="dockhead">
                <span>メッシュ</span>
                <button aria-label="フィルタ"><svg><use href="#filter"/></svg></button>
                <button aria-label="メッシュをフロート"><svg><use href="#restore"/></svg></button>
            </div>
            <div class="tree">
                <button class="section"><svg><use href="#mesh"/></svg><span>メッシュ</span><svg class="arrow"><use href="#tri-right"/></svg></button>
                <button class="section"><svg><use href="#mat"/></svg><span>材料特性</span><svg class="arrow"><use href="#tri-down"/></svg></button>
                <div class="minibar">
                    <button aria-label="材料を追加"><svg viewBox="0 0 24 24"><use href="#mat"/><use href="#plus"/></svg></button>
                    <i class="sep"></i>
                    <button aria-label="複製"><svg><use href="#sheet-off"/></svg></button>
                    <button aria-label="材料を編集"><svg><use href="#prop"/></svg></button>
                    <button aria-label="選択"><svg><use href="#union-off"/></svg></button>
                    <button aria-label="割り当て"><svg><use href="#union-off"/></svg></button>
                    <button aria-label="表"><svg><use href="#unfillet"/></svg></button>
                    <button aria-label="材料"><svg><use href="#chain"/></svg></button>
                    <i class="sep"></i>
                    <button aria-label="箱"><svg><use href="#unite"/></svg></button>
                    <i class="sep"></i>
                    <button aria-label="消去"><svg><use href="#broom"/></svg></button>
                </div>
                <div class="treebody"></div>
                <button class="section" aria-label="断面形状"><svg><use href="#gift"/></svg></button>
                <button class="section" aria-label="要素幾何形状"><svg><use href="#section-geo"/></svg></button>
                <button class="section" aria-label="サポート"><svg><use href="#ground"/></svg></button>
                <button class="section"><svg><use href="#loadcase"/></svg><span>荷重</span><svg class="arrow"><use href="#tri-right"/></svg></button>
                <button class="section"><svg><use href="#bc"/></svg><span>境界条件</span><svg class="arrow"><use href="#tri-right"/></svg></button>
                <button class="section"><svg><use href="#chain"/></svg><span>タイイング</span><svg class="arrow"><use href="#tri-right"/></svg></button>
                <button class="section"><svg><use href="#globe"/></svg><span>基準座標系</span><svg class="arrow"><use href="#tri-right"/></svg></button>
            </div>
            <div class="tabs">
                <button>ジオメトリ</button><button class="active">メッシュ</button><button>解析</button><button>結果</button><button>プロパティ</button><button>レポート</button>
            </div>
        </aside>

        <div class="right">
            <div class="upper">
                <section class="viewport">
                    <svg class="model" width="604" height="480" role="img" aria-label="梁モデル">
                        <path d="M0 199h579v94H0z" fill="#ccc"/>
                        <path d="M36.500 293.500h47v12h-47z" fill="#4682b4" stroke="#000"/>
                        <path d="M437.500 187.500h48v12h-48z" fill="#6699c6" stroke="#000"/>
                        <path d="M60.500 293v12M461.500 187v12" stroke="#000"/>
                        <!-- element edges -->
                        <path d="M0 199.500h580M0 222.500h580M0 246.500h580M0 269.500h580M0 293.500h580" stroke="#000"/>
                        <path d="M13.500 199v94M36.500 199v94M60.500 199v94M83.500 199v94M107.500 199v94M130.500 199v94M154.500 199v94M178.500 199v94M201.500 199v94M225.500 199v94M248.500 199v94M272.500 199v94M296.500 199v94M319.500 199v94M343.500 199v94M367.500 199v94M390.500 199v94M414.500 199v94M437.500 199v94M461.500 199v94M485.500 199v94M508.500 199v94M532.500 199v94M555.500 199v94M579.500 199v94" stroke="#000"/>
                        <!-- reinforcement -->
                        <path d="M0 210.500h579M0 281.500h579M36.500 210v71M83.500 210v71M130.500 210v71M178.500 210v71M225.500 210v71M272.500 210v71M319.500 210v71M367.500 210v71M414.500 210v71M461.500 210v71M508.500 210v71M555.500 210v71" stroke="#00f"/>
                        <!-- supports and load -->
                        <path d="M60.500 305l5 10h-10zM456 178h10l-5 9zM580 199.500l9-5v10zM580 210.500l9-5v10zM580 222.500l9-5v10zM580 234.500l9-5v10zM580 246.500l9-5v10zM580 258.500l9-5v10zM580 269.500l9-5v10zM580 281.500l9-5v10zM580 293.500l9-5v10z" fill="#f00"/>
                        <path d="M461.500 168v19" stroke="#006400"/>
                        <path d="M460 181h3v5h-3z" fill="#006400"/>
                        <!-- axes -->
                        <path d="M60.500 431v-20" stroke="#0f0"/><path d="M60 431.500h22" stroke="#f00"/>
                        <path d="M60.500 405l3 6h-6z" fill="#008c00"/><path d="M88 431.500l-6-3v6z" fill="#a00"/>
                        <text x="64" y="405" fill="#2e2">Y</text><text x="84" y="427" fill="#f33">X</text>
                    </svg>
                </section>
                <aside class="actions">
                    <div class="dockhead">
                        <span>アクション</span>
                        <button aria-label="アクションをフロート"><svg><use href="#restore"/></svg></button>
                        <button aria-label="アクションを閉じる"><svg><use href="#x"/></svg></button>
                    </div>
                    <div class="actionwrap">
                        <div class="actionlist">
                            <h2>作成</h2>
                            <ul>
                                <li><svg><use href="#poly"/></svg>ポリゴンシート</li><li><svg><use href="#ellipse"/></svg>楕円</li>
                                <li><svg><use href="#disc"/></svg>サークルシート</li><li><svg><use href="#earc"/></svg>楕円アーク</li>
                                <li><svg><use href="#line"/></svg>ライン</li><li><svg><use href="#polyline"/></svg>ポリライン</li>
                                <li><svg><use href="#circle"/></svg>サークル</li><li><svg><use href="#curve"/></svg>カーブ</li>
                                <li><svg><use href="#arc"/></svg>アーク</li><li><svg><use href="#point"/></svg>ポイント</li>
                            </ul>
                            <h2>修正</h2>
                            <ul>
                                <li><svg><use href="#move"/></svg>移動</li><li><svg><use href="#sweep"/></svg>スイープ</li>
                                <li><svg><use href="#rotate"/></svg>回転</li><li><svg><use href="#loft"/></svg>ロフト</li>
                                <li><svg><use href="#scale"/></svg>拡大縮小</li><li><svg><use href="#extend"/></svg>延長</li>
                                <li><svg><use href="#array"/></svg>配列コピー</li><li><svg><use href="#trim"/></svg>トリム</li>
                                <li><svg><use href="#mirror"/></svg>シェープの鏡面コピー</li><li><svg><use href="#sew"/></svg>ソーイング</li>
                                <li><svg><use href="#align"/></svg>整列</li><li><svg><use href="#wirecut"/></svg>ワイヤの分割</li>
                                <li><svg><use href="#unite"/></svg>結合</li><li><svg><use href="#fillet"/></svg>フィレット</li>
                                <li><svg><use href="#diff"/></svg>差</li><li><svg><use href="#edgecut"/></svg>エッジの分割</li>
                                <li><svg><use href="#intersect"/></svg>交差</li><li><svg><use href="#sweepout"/></svg>小さいエンティティの削除</li>
                                <li><svg><use href="#cut"/></svg>切り取り</li><li><svg><use href="#clear"/></svg>クリア</li>
                                <li><svg><use href="#project"/></svg>表示</li><li><svg><use href="#optimize"/></svg>最適化</li>
                                <li><svg><use href="#imprint"/></svg>インプリント</li><li><svg><use href="#vmove"/></svg>仮想移動</li>
                                <li><svg><use href="#extrude"/></svg>シェープの押し出し</li>
                            </ul>
                            <h2>割り当て</h2>
                            <ul>
                                <li><svg><use href="#prop"/></svg>シェーププロパティ</li><li><svg><use href="#tying"/></svg>タイイング</li>
                                <li><svg><use href="#rebar"/></svg>埋め込み鉄筋プロパティ</li><li><svg><use href="#initial"/></svg>初期場</li>
                            </ul>
                        </div>
                        <div class="scrollbar">
                            <svg viewBox="0 0 12 12"><path d="M3 7.500L6 4.500l3 3" fill="none" stroke="#444" stroke-width="1.500"/></svg>
                            <div class="track"><div class="thumb"></div></div>
                            <svg viewBox="0 0 12 12"><path d="M3 4.500l3 3 3-3" fill="none" stroke="#444" stroke-width="1.500"/></svg>
                        </div>
                    </div>
                </aside>
            </div>

            <section class="messages">
                <div class="dockhead">
                    <span>メッセージ</span>
                    <button aria-label="メッセージをフロート"><svg><use href="#restore"/></svg></button>
                    <button aria-label="メッセージを閉じる"><svg><use href="#x"/></svg></button>
                </div>
                <div class="minibar">
                    <button aria-label="クリア"><svg><use href="#broom"/></svg></button>
                    <button aria-label="ログを保存"><svg><use href="#save-off"/></svg></button>
                    <i class="sep"></i>
                    <button aria-label="前へ"><svg><use href="#left"/></svg></button>
                    <button aria-label="次へ"><svg><use href="#right"/></svg></button>
                </div>
                <textarea class="log" aria-label="メッセージ" readonly></textarea>
                <div class="tabs">
                    <button class="active">メッセージ</button><button>コマンドコンソール</button>
                </div>
            </section>
        </div>
    </main>

    <footer class="status">
        <span class="coords">--, --</span>
        <span class="units"><svg class="ico16"><use href="#kg"/></svg>単位:ユーザー定義</span>
        <svg class="sizegrip" viewBox="0 0 12 12"><path d="M8 1h2v2H8zM8 5h2v2H8zM8 9h2v2H8zM4 5h2v2H4zM4 9h2v2H4zM0 9h2v2H0z" fill="#b8b8b8"/></svg>
    </footer>

    <form class="dialog" role="dialog" aria-labelledby="dlgTitle">
        <header>
            <svg class="ico16"><use href="#mat-edit"/></svg>
            <span id="dlgTitle">材料特性の編集</span>
            <button type="button" aria-label="ダイアログを閉じる"><svg><use href="#x-thin"/></svg></button>
        </header>
        <div class="dlgbody">
            <div class="row name">
                <label for="matName">名前</label>
                <input id="matName" type="text" value="CON">
            </div>
            <fieldset>
                <legend>追加オプション</legend>
                <label><input type="checkbox">熱効果</label>
                <label><input type="checkbox">濃度効果</label>
                <label><input type="checkbox">成熟度効果</label>
                <label><input type="checkbox">収縮</label>
                <label><input type="checkbox">Creep</label>
                <label><input type="checkbox">せん断強度低減解析</label>
                <label><input type="checkbox">Damping</label>
                <label><input type="checkbox" class="hot">付加動的2次元線質量</label>
            </fieldset>
            <button type="button" class="section"><svg><use href="#check"/></svg><span>線形材料特性</span><svg class="arrow"><use href="#tri-down"/></svg></button>
            <div class="fields">
                <div class="row">
                    <label for="young">ヤング率*</label>
                    <div class="unitbox"><input id="young" type="text" value="30000"><span>N/mm²</span></div>
                    <button type="button" class="fx">fx</button>
                </div>
                <div class="row">
                    <label for="poisson">ポアソン比*</label>
                    <div class="unitbox"><input id="poisson" type="text" value="0.2"><span></span></div>
                    <button type="button" class="fx">fx</button>
                </div>
                <div class="row">
                    <label for="density">質量密度</label>
                    <div class="unitbox"><input id="density" type="text" value=""><span>T/mm³</span></div>
                    <button type="button" class="fx">fx</button>
                </div>
            </div>
            <button type="button" class="section"><svg><use href="#check"/></svg><span>全ひずみひび割れモデル</span><svg class="arrow"><use href="#tri-right"/></svg></button>
            <button type="button" class="section"><svg><use href="#check"/></svg><span>引張挙動</span><svg class="arrow"><use href="#tri-right"/></svg></button>
            <button type="button" class="section"><svg><use href="#check"/></svg><span>圧縮挙動</span><svg class="arrow"><use href="#tri-right"/></svg></button>
            <div class="dlgbuttons">
                <button type="button" class="default">閉じる</button>
                <button type="button">ヘルプ</button>
            </div>
        </div>
    </form>
</body>
</html>
```
FILE: styles.css
```css
* {
    box-sizing: border-box;
}
body {
    margin: 0;
    height: 100vh;
    overflow: hidden;
    display: flex;
    flex-direction: column;
    border: 1px solid #a8a8a8;
    background: #efefef;
    color: #000;
    font: 12px/16px "Liberation Sans", "Noto Sans CJK JP", sans-serif;
    font-feature-settings: "palt";
}
button, input, select, textarea {
    font: inherit;
    font-feature-settings: inherit;
    color: inherit;
}
button {
    padding: 0;
    border: none;
    background: none;
    white-space: nowrap;
}
svg {
    display: block;
    flex: none;
}
.sprite {
    position: absolute;
    width: 0;
    height: 0;
}
.ico16 {
    width: 16px;
    height: 16px;
}
.mat-text {
    font: bold 23px "Liberation Sans", sans-serif;
    fill: #0a9c94;
}
.qmark {
    font: bold 18px "Liberation Sans", sans-serif;
    fill: #555;
}

/* title and menu */
.titlebar {
    display: flex;
    align-items: center;
    height: 28px;
    padding-left: 8px;
    background: #fff;
    color: #888;
}
.caption {
    margin-left: 5px;
    font: 13px/20px "Open Sans", sans-serif;
}
.winbtns {
    display: flex;
    margin-left: auto;
}
.winbtns button {
    width: 45px;
    height: 28px;
    display: grid;
    place-items: center;
}
.winbtns svg {
    width: 12px;
    height: 12px;
}
.menubar {
    display: flex;
    align-items: center;
    gap: 18px;
    height: 26px;
    padding-left: 8px;
    background: #fff;
    border-bottom: 1px solid #f4f4f4;
    font-family: "Noto Sans", "Noto Sans CJK JP", sans-serif;
    font-size: 13px;
}
.menubar a {
    color: #888;
    text-decoration: none;
}

/* toolbars */
.toolrow {
    display: flex;
    height: 34px;
    border-top: 1px solid #fff;
    border-bottom: 1px solid #b4b4b4;
}
.toolbar {
    display: flex;
    align-items: center;
    padding: 0 2px 0 0;
    border-right: 1px solid #b4b4b4;
}
.toolbar::before {
    content: "";
    width: 2px;
    height: 27px;
    margin: 0 3px 0 4px;
    background: repeating-linear-gradient(#b8b8b8 0 2px, #efefef 2px 4px);
}
.toolbar.fill {
    flex: 1;
}
.toolrow .toolbar:last-child {
    padding-right: 0;
    border-right: none;
}
.tool {
    width: 31px;
    height: 29px;
    display: grid;
    place-items: center;
}
.tool svg {
    width: 24px;
    height: 24px;
}
.tool.on {
    background: #bfdbf3;
    border: 1px solid #90c4ee;
}
.drop {
    width: 12px;
    height: 29px;
    display: grid;
    place-items: center;
}
.drop::before {
    content: "";
    border: 5px solid transparent;
    border-top-color: #999;
    border-bottom: none;
}
.sep {
    width: 1px;
    height: 24px;
    margin: 0 2px 0 3px;
    background: #cfcfcf;
}
.more {
    width: 20px;
    font-size: 14px;
    color: #333;
}
.more.wide {
    width: 27px;
    text-align: right;
}
.toolbar:last-child .more {
    width: 14px;
}
.combo {
    display: flex;
    align-items: center;
    height: 22px;
    border: 1px solid #a8a8a8;
    background: #e1e1e1;
}
.combo .ico16 {
    margin-left: 4px;
}
.combo select {
    appearance: none;
    flex: 1;
    height: 20px;
    padding: 0 20px 0 3px;
    border: none;
    background: none;
}
.combo::after {
    content: "";
    width: 6px;
    height: 6px;
    margin: -3px 6px 0 -14px;
    border: solid #555;
    border-width: 0 1px 1px 0;
    transform: rotate(45deg);
}
.set-combo {
    width: 151px;
    margin: 0 1px;
}
.view-combo {
    width: 199px;
}

/* docks */
.workspace {
    display: flex;
    flex: 1;
    min-height: 0;
    gap: 5px;
    padding-left: 1px;
}
.left {
    display: flex;
    flex-direction: column;
    width: 362px;
    padding-top: 1px;
}
.dockhead {
    display: flex;
    align-items: center;
    flex: none;
    height: 18px;
    padding: 0 4px 0 3px;
    background: #dadada;
    border: 1px solid #b8b8b8;
}
.dockhead span {
    flex: 1;
}
.dockhead button {
    margin-left: 9px;
}
.dockhead svg {
    width: 10px;
    height: 10px;
}
.tree {
    display: flex;
    flex: 1;
    flex-direction: column;
    margin-top: 1px;
    border: 1px solid #828790;
}
.section {
    display: flex;
    align-items: center;
    flex: none;
    width: 100%;
    height: 24px;
    padding: 0 10px 0 7px;
    background: linear-gradient(#e4ecfa, #cbdaf1 60%, #c9d8f0);
    text-align: left;
}
.section svg {
    width: 16px;
    height: 16px;
}
.section span {
    flex: 1;
    margin-left: 12px;
}
.section svg.arrow {
    width: 13px;
    height: 13px;
}
.minibar {
    display: flex;
    align-items: center;
    flex: none;
    height: 27px;
    padding-left: 2px;
    gap: 4px;
}
.minibar button {
    width: 20px;
    display: grid;
    place-items: center;
}
.minibar svg {
    width: 16px;
    height: 16px;
}
.minibar .sep {
    height: 16px;
    margin: 0;
}
.treebody {
    flex: 1;
    background: #fff;
    border: 1px solid #828790;
    border-width: 1px 0;
}
.tabs {
    display: flex;
    flex: none;
    height: 18px;
    padding-left: 1px;
    font-size: 11px;
}
.tabs button {
    height: 17px;
    padding: 0 11px;
    border: solid #d6d6d6;
    border-width: 0 1px 1px 0;
}
.tabs .active {
    height: 19px;
    background: #fff;
}
.right {
    display: flex;
    flex: 1;
    flex-direction: column;
    min-width: 0;
}
.upper {
    display: flex;
    flex: 1;
    min-height: 0;
    gap: 6px;
}
.viewport {
    flex: 1;
    overflow: hidden;
    background: #fff;
    border-right: 1px solid #dcdcdc;
}
.model {
    shape-rendering: crispEdges;
    font-size: 11px;
}
.actions {
    display: flex;
    flex-direction: column;
    width: 352px;
    padding-top: 1px;
}
.actionwrap {
    display: flex;
    flex: 1;
    min-height: 0;
    margin-top: 1px;
}
.actionlist {
    flex: 1;
    overflow: hidden;
    padding-left: 2px;
}
.actionlist h2 {
    height: 20px;
    margin: 0;
    padding-left: 2px;
    background: linear-gradient(#e4ecfa, #cbdaf1 60%, #c9d8f0);
    font-size: 12px;
    line-height: 20px;
    font-weight: normal;
}
.actionlist ul {
    display: grid;
    grid-template-columns: 1fr 1fr;
    margin: 0;
    padding: 0 0 0 2px;
    list-style: none;
}
.actionlist li {
    display: flex;
    align-items: center;
    gap: 1px;
    height: 20px;
    font-size: 11px;
    white-space: nowrap;
}
.actionlist li svg {
    width: 16px;
    height: 16px;
}
.scrollbar {
    display: flex;
    flex-direction: column;
    width: 16px;
    padding: 2px 0;
}
.scrollbar svg {
    width: 16px;
    height: 15px;
}
.track {
    flex: 1;
}
.thumb {
    height: 75%;
    background: #cdcdcd;
}
.messages {
    display: flex;
    flex: none;
    flex-direction: column;
    height: 143px;
    padding-top: 6px;
    border-top: 1px solid #dcdcdc;
}
.messages .dockhead {
    height: 19px;
    padding-right: 6px;
}
.messages .dockhead span {
    padding-left: 2px;
    font-size: 13px;
}
.messages .minibar {
    height: 28px;
}
.log {
    flex: 1;
    display: block;
    width: 100%;
    resize: none;
    border: 1px solid #7a7a7a;
    background: #fff;
}

/* status bar */
.status {
    display: flex;
    align-items: center;
    justify-content: flex-end;
    flex: none;
    height: 31px;
}
.coords {
    height: 24px;
    padding: 0 5px;
    border: 1px solid #a0a0a0;
    border-right-color: #fff;
    border-bottom-color: #fff;
    line-height: 22px;
}
.units {
    display: flex;
    align-items: center;
    height: 24px;
    margin-left: 9px;
    padding-right: 14px;
    border-right: 1px solid #d4d4d4;
}
.sizegrip {
    align-self: flex-end;
    width: 12px;
    height: 12px;
    margin-left: 6px;
}

/* material dialog */
.dialog {
    position: absolute;
    left: 17px;
    top: 235px;
    width: 371px;
    background: #f0f0f0;
    border: 1px solid #6d6d6d;
    box-shadow: 0 3px 16px rgba(0, 0, 0, 0.4);
}
.dialog header {
    display: flex;
    align-items: center;
    height: 29px;
    padding: 0 9px 2px 8px;
    background: #fff;
}
.dialog header span {
    flex: 1;
    margin-left: 5px;
}
.dialog header button svg {
    width: 11px;
    height: 11px;
}
.dlgbody {
    padding: 9px 9px 9px 32px;
}
.row {
    display: flex;
    align-items: center;
    height: 30px;
}
.row label {
    width: 82px;
}
.dialog input[type="text"] {
    height: 20px;
    padding: 0 1px;
    border: 1px solid #7a7a7a;
    background: #fff;
}
.row.name {
    height: 20px;
}
.row.name label {
    width: 90px;
    padding-top: 4px;
}
.row.name input {
    width: 209px;
}
fieldset {
    display: grid;
    grid-template-columns: 157px 1fr;
    margin: 10px 0 8px;
    padding: 4px 9px 5px;
    border: 1px solid #dcdcdc;
}
legend {
    padding: 0 2px 0 0;
}
fieldset label {
    display: flex;
    align-items: center;
    height: 22px;
    white-space: nowrap;
}
fieldset input {
    appearance: none;
    width: 13px;
    height: 13px;
    margin: 0 5px 0 0;
    border: 1px solid #333;
    background: #fff;
}
fieldset .hot {
    border-color: #0078d7;
}
.fields {
    padding: 6px 0 6px 8px;
}
.unitbox {
    display: flex;
    align-items: center;
    width: 175px;
    height: 21px;
    border: 1px solid #7a7a7a;
    background: #fff;
}
.unitbox input[type="text"] {
    width: 118px;
    height: 18px;
    padding: 0;
    border: none;
    text-align: right;
}
.unitbox span {
    flex: 1;
    padding-right: 13px;
    text-align: right;
}
.fx {
    width: 26px;
    height: 22px;
    margin-left: 7px;
    border: 1px solid #adadad;
    background: #e1e1e1;
    color: #333;
    font: italic 17px/18px "Liberation Serif", serif;
}
.dlgbuttons {
    display: flex;
    justify-content: flex-end;
    gap: 8px;
    padding: 8px 1px 0 0;
}
.dlgbuttons button {
    width: 73px;
    height: 21px;
    border: 1px solid #adadad;
    background: #e1e1e1;
}
.dlgbuttons .default {
    border: 2px solid #0078d7;
}
```
